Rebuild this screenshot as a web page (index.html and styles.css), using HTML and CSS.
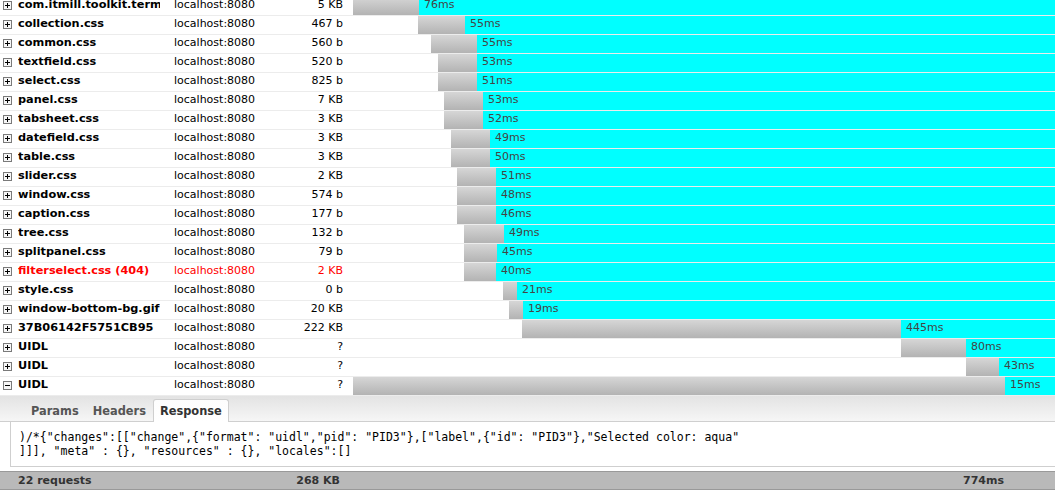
FILE: index.html
```html
<!DOCTYPE html>
<html>
<head>
<meta charset="utf-8">
<link rel="stylesheet" href="styles.css">
</head>
<body>
<div class="net">
  <div class="list">
    <div class="rows">
      <div class="row"><span class="tg"><svg width="9" height="9"><rect x=".5" y=".5" width="8" height="8" fill="#f6f6f6" stroke="#7a7a7a"/><path d="M2 4.5h5M4.5 2v5" stroke="#000"/></svg></span><span class="name">com.itmill.toolkit.term</span><span class="host">localhost:8080</span><span class="size">5 KB</span><div class="tl"><span class="pad" style="width:0px"></span><span class="bar" style="width:66px"></span><span class="rest">76ms</span></div></div>
      <div class="row"><span class="tg"><svg width="9" height="9"><rect x=".5" y=".5" width="8" height="8" fill="#f6f6f6" stroke="#7a7a7a"/><path d="M2 4.5h5M4.5 2v5" stroke="#000"/></svg></span><span class="name">collection.css</span><span class="host">localhost:8080</span><span class="size">467 b</span><div class="tl"><span class="pad" style="width:65px"></span><span class="bar" style="width:47px"></span><span class="rest">55ms</span></div></div>
      <div class="row"><span class="tg"><svg width="9" height="9"><rect x=".5" y=".5" width="8" height="8" fill="#f6f6f6" stroke="#7a7a7a"/><path d="M2 4.5h5M4.5 2v5" stroke="#000"/></svg></span><span class="name">common.css</span><span class="host">localhost:8080</span><span class="size">560 b</span><div class="tl"><span class="pad" style="width:78px"></span><span class="bar" style="width:46px"></span><span class="rest">55ms</span></div></div>
      <div class="row"><span class="tg"><svg width="9" height="9"><rect x=".5" y=".5" width="8" height="8" fill="#f6f6f6" stroke="#7a7a7a"/><path d="M2 4.5h5M4.5 2v5" stroke="#000"/></svg></span><span class="name">textfield.css</span><span class="host">localhost:8080</span><span class="size">520 b</span><div class="tl"><span class="pad" style="width:85px"></span><span class="bar" style="width:39px"></span><span class="rest">53ms</span></div></div>
      <div class="row"><span class="tg"><svg width="9" height="9"><rect x=".5" y=".5" width="8" height="8" fill="#f6f6f6" stroke="#7a7a7a"/><path d="M2 4.5h5M4.5 2v5" stroke="#000"/></svg></span><span class="name">select.css</span><span class="host">localhost:8080</span><span class="size">825 b</span><div class="tl"><span class="pad" style="width:85px"></span><span class="bar" style="width:39px"></span><span class="rest">51ms</span></div></div>
      <div class="row"><span class="tg"><svg width="9" height="9"><rect x=".5" y=".5" width="8" height="8" fill="#f6f6f6" stroke="#7a7a7a"/><path d="M2 4.5h5M4.5 2v5" stroke="#000"/></svg></span><span class="name">panel.css</span><span class="host">localhost:8080</span><span class="size">7 KB</span><div class="tl"><span class="pad" style="width:91px"></span><span class="bar" style="width:39px"></span><span class="rest">53ms</span></div></div>
      <div class="row"><span class="tg"><svg width="9" height="9"><rect x=".5" y=".5" width="8" height="8" fill="#f6f6f6" stroke="#7a7a7a"/><path d="M2 4.5h5M4.5 2v5" stroke="#000"/></svg></span><span class="name">tabsheet.css</span><span class="host">localhost:8080</span><span class="size">3 KB</span><div class="tl"><span class="pad" style="width:91px"></span><span class="bar" style="width:39px"></span><span class="rest">52ms</span></div></div>
      <div class="row"><span class="tg"><svg width="9" height="9"><rect x=".5" y=".5" width="8" height="8" fill="#f6f6f6" stroke="#7a7a7a"/><path d="M2 4.5h5M4.5 2v5" stroke="#000"/></svg></span><span class="name">datefield.css</span><span class="host">localhost:8080</span><span class="size">3 KB</span><div class="tl"><span class="pad" style="width:98px"></span><span class="bar" style="width:39px"></span><span class="rest">49ms</span></div></div>
      <div class="row"><span class="tg"><svg width="9" height="9"><rect x=".5" y=".5" width="8" height="8" fill="#f6f6f6" stroke="#7a7a7a"/><path d="M2 4.5h5M4.5 2v5" stroke="#000"/></svg></span><span class="name">table.css</span><span class="host">localhost:8080</span><span class="size">3 KB</span><div class="tl"><span class="pad" style="width:98px"></span><span class="bar" style="width:39px"></span><span class="rest">50ms</span></div></div>
      <div class="row"><span class="tg"><svg width="9" height="9"><rect x=".5" y=".5" width="8" height="8" fill="#f6f6f6" stroke="#7a7a7a"/><path d="M2 4.5h5M4.5 2v5" stroke="#000"/></svg></span><span class="name">slider.css</span><span class="host">localhost:8080</span><span class="size">2 KB</span><div class="tl"><span class="pad" style="width:104px"></span><span class="bar" style="width:39px"></span><span class="rest">51ms</span></div></div>
      <div class="row"><span class="tg"><svg width="9" height="9"><rect x=".5" y=".5" width="8" height="8" fill="#f6f6f6" stroke="#7a7a7a"/><path d="M2 4.5h5M4.5 2v5" stroke="#000"/></svg></span><span class="name">window.css</span><span class="host">localhost:8080</span><span class="size">574 b</span><div class="tl"><span class="pad" style="width:104px"></span><span class="bar" style="width:39px"></span><span class="rest">48ms</span></div></div>
      <div class="row"><span class="tg"><svg width="9" height="9"><rect x=".5" y=".5" width="8" height="8" fill="#f6f6f6" stroke="#7a7a7a"/><path d="M2 4.5h5M4.5 2v5" stroke="#000"/></svg></span><span class="name">caption.css</span><span class="host">localhost:8080</span><span class="size">177 b</span><div class="tl"><span class="pad" style="width:104px"></span><span class="bar" style="width:39px"></span><span class="rest">46ms</span></div></div>
      <div class="row"><span class="tg"><svg width="9" height="9"><rect x=".5" y=".5" width="8" height="8" fill="#f6f6f6" stroke="#7a7a7a"/><path d="M2 4.5h5M4.5 2v5" stroke="#000"/></svg></span><span class="name">tree.css</span><span class="host">localhost:8080</span><span class="size">132 b</span><div class="tl"><span class="pad" style="width:111px"></span><span class="bar" style="width:40px"></span><span class="rest">49ms</span></div></div>
      <div class="row"><span class="tg"><svg width="9" height="9"><rect x=".5" y=".5" width="8" height="8" fill="#f6f6f6" stroke="#7a7a7a"/><path d="M2 4.5h5M4.5 2v5" stroke="#000"/></svg></span><span class="name">splitpanel.css</span><span class="host">localhost:8080</span><span class="size">79 b</span><div class="tl"><span class="pad" style="width:111px"></span><span class="bar" style="width:33px"></span><span class="rest">45ms</span></div></div>
      <div class="row err"><span class="tg"><svg width="9" height="9"><rect x=".5" y=".5" width="8" height="8" fill="#f6f6f6" stroke="#7a7a7a"/><path d="M2 4.5h5M4.5 2v5" stroke="#000"/></svg></span><span class="name">filterselect.css (404)</span><span class="host">localhost:8080</span><span class="size">2 KB</span><div class="tl"><span class="pad" style="width:111px"></span><span class="bar" style="width:32px"></span><span class="rest">40ms</span></div></div>
      <div class="row"><span class="tg"><svg width="9" height="9"><rect x=".5" y=".5" width="8" height="8" fill="#f6f6f6" stroke="#7a7a7a"/><path d="M2 4.5h5M4.5 2v5" stroke="#000"/></svg></span><span class="name">style.css</span><span class="host">localhost:8080</span><span class="size">0 b</span><div class="tl"><span class="pad" style="width:150px"></span><span class="bar" style="width:14px"></span><span class="rest">21ms</span></div></div>
      <div class="row"><span class="tg"><svg width="9" height="9"><rect x=".5" y=".5" width="8" height="8" fill="#f6f6f6" stroke="#7a7a7a"/><path d="M2 4.5h5M4.5 2v5" stroke="#000"/></svg></span><span class="name">window-bottom-bg.gif</span><span class="host">localhost:8080</span><span class="size">20 KB</span><div class="tl"><span class="pad" style="width:156px"></span><span class="bar" style="width:14px"></span><span class="rest">19ms</span></div></div>
      <div class="row"><span class="tg"><svg width="9" height="9"><rect x=".5" y=".5" width="8" height="8" fill="#f6f6f6" stroke="#7a7a7a"/><path d="M2 4.5h5M4.5 2v5" stroke="#000"/></svg></span><span class="name">37B06142F5751CB95</span><span class="host">localhost:8080</span><span class="size">222 KB</span><div class="tl"><span class="pad" style="width:169px"></span><span class="bar" style="width:379px"></span><span class="rest">445ms</span></div></div>
      <div class="row"><span class="tg"><svg width="9" height="9"><rect x=".5" y=".5" width="8" height="8" fill="#f6f6f6" stroke="#7a7a7a"/><path d="M2 4.5h5M4.5 2v5" stroke="#000"/></svg></span><span class="name">UIDL</span><span class="host">localhost:8080</span><span class="size">?</span><div class="tl"><span class="pad" style="width:548px"></span><span class="bar" style="width:65px"></span><span class="rest">80ms</span></div></div>
      <div class="row"><span class="tg"><svg width="9" height="9"><rect x=".5" y=".5" width="8" height="8" fill="#f6f6f6" stroke="#7a7a7a"/><path d="M2 4.5h5M4.5 2v5" stroke="#000"/></svg></span><span class="name">UIDL</span><span class="host">localhost:8080</span><span class="size">?</span><div class="tl"><span class="pad" style="width:613px"></span><span class="bar" style="width:33px"></span><span class="rest">43ms</span></div></div>
      <div class="row"><span class="tg"><svg width="9" height="9"><rect x=".5" y=".5" width="8" height="8" fill="#f6f6f6" stroke="#7a7a7a"/><path d="M2 4.5h5" stroke="#000"/></svg></span><span class="name">UIDL</span><span class="host">localhost:8080</span><span class="size">?</span><div class="tl"><span class="pad" style="width:0px"></span><span class="bar" style="width:652px"></span><span class="rest">15ms</span></div></div>
    </div>
  </div>
  <div class="tabs">
    <span class="tab">Params</span>
    <span class="tab">Headers</span>
    <span class="tab active">Response</span>
  </div>
  <div class="panelwrap">
    <pre class="resp">)/*{"changes":[["change",{"format": "uidl","pid": "PID3"},["label",{"id": "PID3"},"Selected color: aqua"
]]], "meta" : {}, "resources" : {}, "locales":[]</pre>
  </div>
  <div class="footer">
    <span class="f-count">22 requests</span>
    <span class="f-size">268 KB</span>
    <span class="f-time">774ms</span>
  </div>
</div>
</body>
</html>
```
FILE: styles.css
```css
html, body {
  margin: 0;
  padding: 0;
  background: #fff;
}
body {
  font-family: "DejaVu Sans", Verdana, sans-serif;
  font-size: 11px;
  color: #000;
  width: 1055px;
  height: 491px;
  overflow: hidden;
}
.net {
  display: flex;
  flex-direction: column;
}
.list {
  height: 396px;
  overflow: hidden;
}
.rows {
  margin-top: -3px;
}
.row {
  display: flex;
  height: 18px;
  line-height: 16px;
  border-bottom: 1px solid #ececec;
  white-space: nowrap;
}
.tg {
  width: 18px;
  flex: none;
  display: flex;
  align-items: center;
  padding-left: 3px;
  box-sizing: border-box;
  padding-bottom: 1px;
}
.tg svg {
  display: block;
}
.name {
  width: 142px;
  margin-right: 14px;
  flex: none;
  overflow: hidden;
  font-weight: bold;
  font-size: 11.3px;
}
.host {
  width: 120px;
  flex: none;
}
.size {
  width: 49px;
  flex: none;
  text-align: right;
}
.err .name, .err .host, .err .size {
  color: #f00;
}
.tl {
  flex: 1;
  margin-left: 10px;
  display: flex;
  height: 18px;
}
.pad {
  flex: none;
}
.bar {
  flex: none;
  background: linear-gradient(#d6d6d6, #b3b3b3);
}
.rest {
  flex: 1;
  background: #0ff;
  color: #444;
  padding-left: 5px;
  overflow: hidden;
}
.tabs {
  display: flex;
  align-items: flex-end;
  height: 25px;
  padding-left: 24px;
  border-bottom: 1px solid #cfcfcf;
  background: linear-gradient(#e3e3e3, #f6f6f6);
}
.tab {
  height: 22px;
  line-height: 22px;
  padding: 0 6px;
  border: 1px solid transparent;
  border-bottom: none;
  margin-bottom: -1px;
  font-weight: bold;
  font-size: 11.4px;
  color: #555;
}
.tab.active {
  border-color: #cfcfcf;
  border-radius: 3px 3px 0 0;
  background: linear-gradient(#fdfdfd, #fff);
  color: #333;
}
.panelwrap {
  background: #fff;
  padding-left: 10px;
  padding-bottom: 4px;
}
.resp {
  margin: 0;
  border-left: 1px solid #cfcfcf;
  border-bottom: 1px solid #cfcfcf;
  padding: 8px 0 8px 8px;
  font-family: "DejaVu Sans Mono", monospace;
  font-size: 11.5px;
  line-height: 14px;
  color: #000;
}
.footer {
  display: flex;
  height: 17px;
  line-height: 17px;
  border-top: 1px solid #999;
  border-bottom: 1px solid #999;
  background: #b9b9b9;
  font-weight: bold;
  color: #333;
  white-space: nowrap;
}
.f-count {
  width: 276px;
  padding-left: 18px;
  box-sizing: border-box;
  flex: none;
}
.f-size {
  width: 64px;
  text-align: right;
  flex: none;
}
.f-time {
  margin-left: 623px;
}
```
